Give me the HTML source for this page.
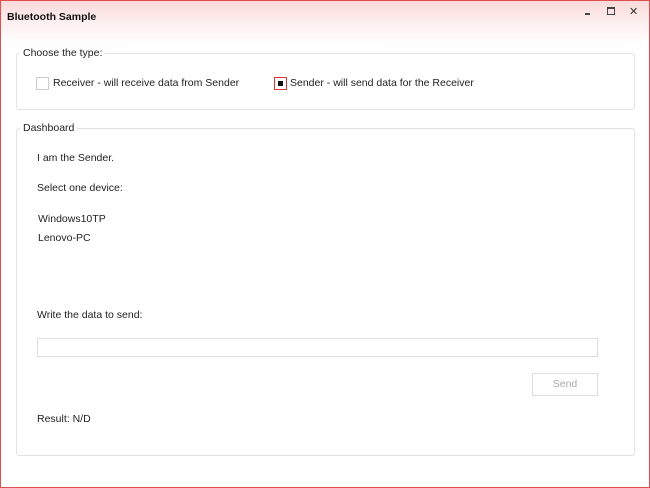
<!DOCTYPE html>
<html><head><style>
body{margin:0;width:650px;height:488px;overflow:hidden;font-family:"Liberation Sans",sans-serif;font-size:10.5px;color:#222;}
.win{position:absolute;left:0;top:0;width:648px;height:486px;border:1px solid #e05050;background:linear-gradient(#fbd9d9 0px,#fdf0f0 22px,#fff 45px,#fff);}
.t{position:absolute;white-space:nowrap;}
.box{position:absolute;border:1px solid #e3e3e3;border-radius:3px;}
.leg{position:absolute;background:#fff;padding:0 3px;}
</style></head><body>
<div class="win">
<div class="t" style="left:6px;top:10px;font-weight:bold;font-size:10.5px;color:#111">Bluetooth Sample</div>
<div style="position:absolute;left:584px;top:12px;width:5px;height:2px;background:#444"></div>
<div style="position:absolute;left:606px;top:6px;width:6px;height:5px;border:1px solid #444;border-top-width:2px"></div>
<div class="t" style="left:628px;top:4px;font-size:11px;color:#333">✕</div>
<div class="box" style="left:15px;top:52px;width:617px;height:55px"></div>
<div class="leg t" style="left:19px;top:46px">Choose the type:</div>
<div style="position:absolute;left:35px;top:76px;width:11px;height:11px;border:1px solid #ccc"></div>
<div class="t" style="left:52px;top:76px">Receiver - will receive data from Sender</div>
<div style="position:absolute;left:273px;top:76px;width:11px;height:11px;border:1px solid #d33"></div>
<div style="position:absolute;left:277px;top:80px;width:5px;height:5px;background:#111"></div>
<div class="t" style="left:289px;top:76px">Sender - will send data for the Receiver</div>
<div class="box" style="left:15px;top:127px;width:617px;height:326px"></div>
<div class="leg t" style="left:19px;top:121px">Dashboard</div>
<div class="t" style="left:36px;top:151px">I am the Sender.</div>
<div class="t" style="left:36px;top:181px">Select one device:</div>
<div class="t" style="left:37px;top:212px">Windows10TP</div>
<div class="t" style="left:37px;top:231px">Lenovo-PC</div>
<div class="t" style="left:36px;top:308px">Write the data to send:</div>
<div style="position:absolute;left:36px;top:337px;width:559px;height:17px;border:1px solid #ddd"></div>
<div style="position:absolute;left:531px;top:372px;width:64px;height:21px;border:1px solid #ddd;color:#aaa;text-align:center;line-height:21px">Send</div>
<div class="t" style="left:36px;top:412px">Result: N/D</div>
</div>
</body></html>
